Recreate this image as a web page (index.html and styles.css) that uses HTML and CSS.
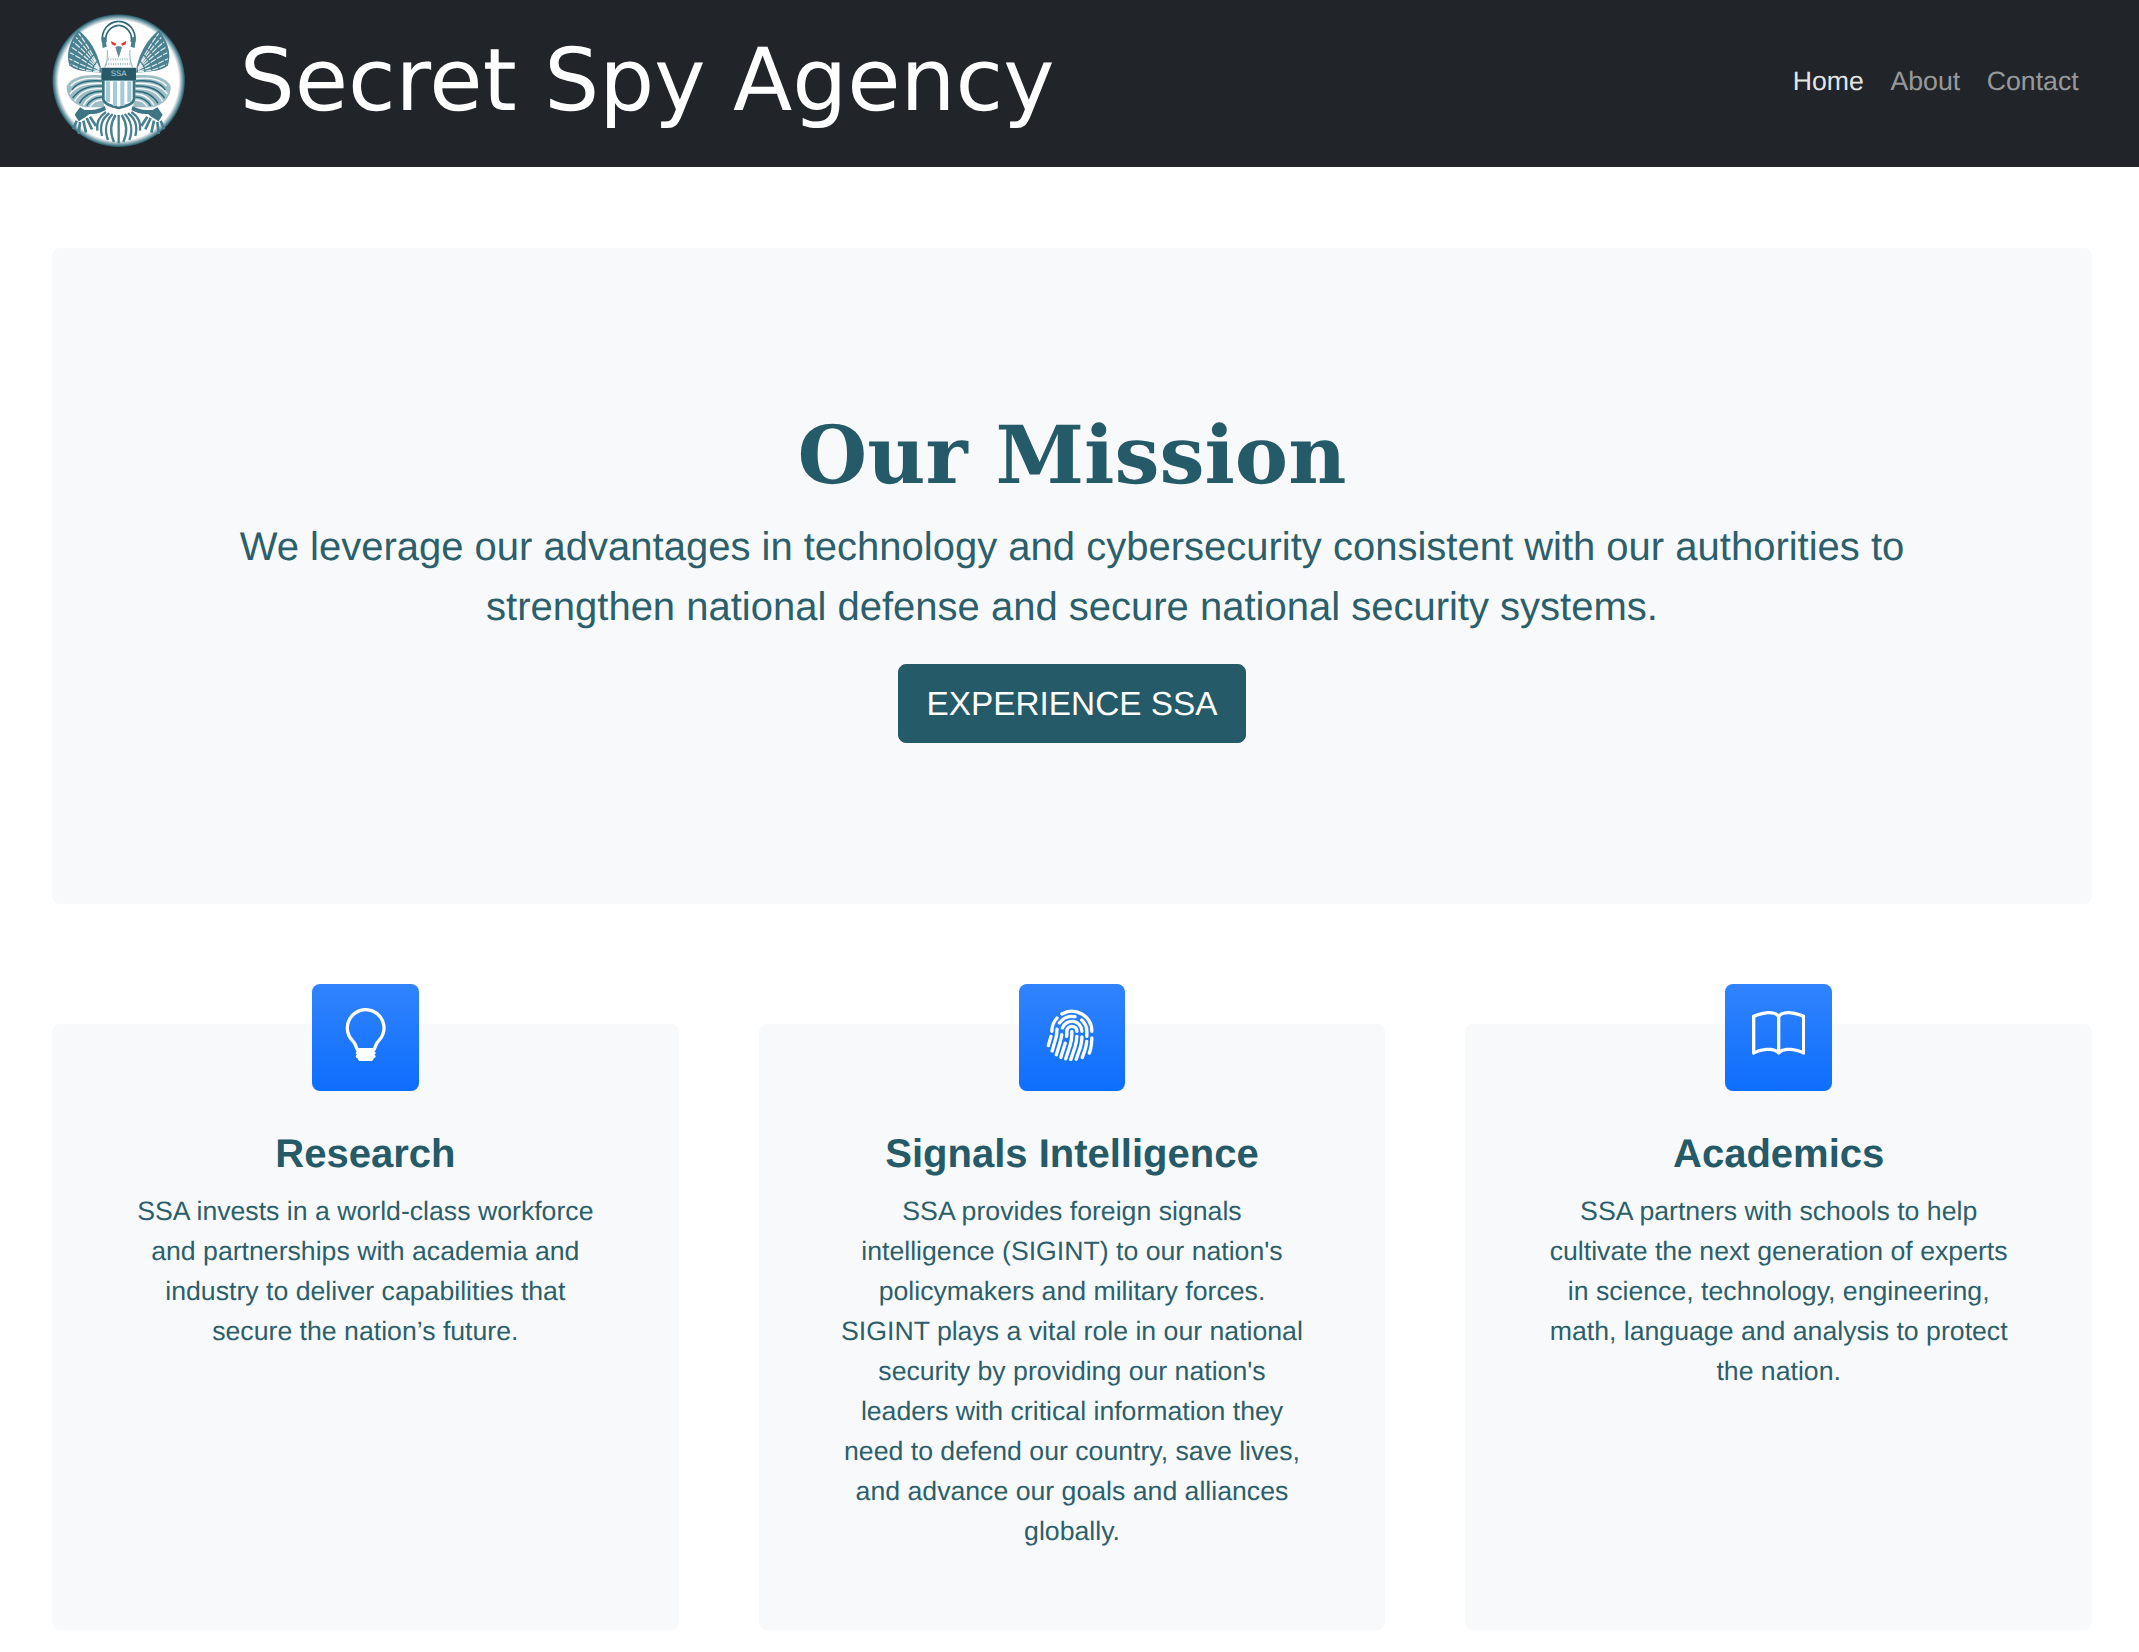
FILE: index.html
```html
<!DOCTYPE html>
<html lang="en">
<head>
<meta charset="utf-8">
<title>Secret Spy Agency</title>
<link rel="stylesheet" href="styles.css">
</head>
<body>
<header class="navbar">
  <a class="brand" href="#">
    <svg class="logo" viewBox="60 39 413 413" role="img" aria-label="SSA seal">
      <defs>
        <radialGradient id="rim" gradientUnits="userSpaceOnUse" cx="266" cy="242" r="200">
          <stop offset="0.9" stop-color="#fff"/>
          <stop offset="0.985" stop-color="#2f6a7a"/>
          <stop offset="1" stop-color="#2f6a7a" stop-opacity="0"/>
        </radialGradient>
        <filter id="soft" x="-5%" y="-5%" width="110%" height="110%"><feGaussianBlur stdDeviation="1.8"/></filter>
        <g id="half">
          <path class="wing" d="M145 90C178 118 200 150 212 200L214 218C170 216 132 212 118 196C108 165 116 128 145 90Z"/>
          <path class="wing-line" d="M208 205C190 165 168 130 146 100M208 206C186 168 162 138 138 112M208 208C180 172 155 145 130 126M208 209C178 182 152 158 124 142M208 210C176 194 150 172 120 158M208 214C176 205 150 192 118 176M208 216C176 214 150 208 122 192"/>
          <path class="swirl" d="M216 226C170 222 125 228 110 258C108 288 130 316 166 322L222 322Z"/>
          <path class="swirl-line" d="M216 236C178 232 140 238 122 258M216 250C176 248 140 254 120 282M216 266C180 264 150 274 134 304M216 282C192 282 172 294 160 316M216 300C200 300 188 308 180 320"/>
          <path class="swirl-dark" d="M216 243C178 240 140 246 126 270M216 258C182 256 150 264 128 294M216 274C188 274 164 284 148 310M216 291C198 292 180 300 170 318"/>
          <path class="claw" d="M224 318C200 332 180 330 164 330L150 322L134 344L146 364L168 350L178 342C196 344 212 338 228 330Z"/>
          <path class="tassel" d="M140 362L130 388M150 366L146 402M160 362L168 398M170 354L186 388M180 350L198 378"/>
          <path class="tail" d="M257 345C244 365 238 395 252 426"/>
          <path class="tail" d="M248 342C230 360 222 388 234 420"/>
          <path class="tail" d="M238 340C218 354 208 376 216 408"/>
          <path class="tail" d="M228 336C210 348 198 366 202 392"/>
          <path class="head" d="M218 126C212 90 235 66 266 64"/>
          <path class="head" d="M228 126C224 100 240 78 266 76"/>
          <path class="cup" d="M214 110L226 112L230 140L218 144Z"/>
          <path class="neck" d="M232 150C234 172 230 190 224 202"/>
          <path class="eye" d="M243 123L259 131L255 137L245 133Z"/>
        </g>
      </defs>
      <circle cx="266" cy="242" r="200" fill="url(#rim)"/>
      <g filter="url(#soft)">
        <use href="#half"/>
        <use href="#half" transform="translate(532 0) scale(-1 1)"/>
        <path class="beak" d="M256 142L266 174L276 142C272 138 260 138 256 142Z"/>
        <path class="tail" d="M266 345V430"/>
        <path class="crop" d="M234 178H298M228 192H304"/>
        <path class="shield" d="M220 238H312V295C312 312 290 318 266 324C242 318 220 312 220 295Z"/>
        <path class="stripe" d="M234 244V306M255 244V318M277 244V318M298 244V306"/>
        <rect class="banner" x="214" y="203" width="104" height="37" rx="2"/>
      </g>
      <text class="seal-text" x="266" y="229">SSA</text>
    </svg>
    <span class="brand-name">Secret Spy Agency</span>
  </a>
  <nav class="nav">
    <a class="nav-link active" href="#">Home</a>
    <a class="nav-link" href="#">About</a>
    <a class="nav-link" href="#">Contact</a>
  </nav>
</header>
<main class="page">
  <section class="hero">
    <h1 class="hero-title">Our Mission</h1>
    <p class="lead">We leverage our advantages in technology and cybersecurity consistent with our authorities to strengthen national defense and secure national security systems.</p>
    <a class="btn" href="#">EXPERIENCE SSA</a>
  </section>
  <section class="features">
    <article class="feature">
      <div class="feature-icon">
        <svg viewBox="0 0 16 16" fill="currentColor"><path d="M2 6a6 6 0 1 1 10.174 4.31c-.203.196-.359.4-.453.619l-.762 1.769A.5.5 0 0 1 10.5 13a.5.5 0 0 1 0 1 .5.5 0 0 1 0 1l-.224.447a1 1 0 0 1-.894.553H6.618a1 1 0 0 1-.894-.553L5.5 15a.5.5 0 0 1 0-1 .5.5 0 0 1 0-1 .5.5 0 0 1-.46-.302l-.761-1.77a1.964 1.964 0 0 0-.453-.618A5.984 5.984 0 0 1 2 6zm6-5a5 5 0 0 0-3.479 8.592c.263.254.514.564.676.941L5.83 12h4.342l.632-1.467c.162-.377.413-.687.676-.941A5 5 0 0 0 8 1z"/></svg>
      </div>
      <h2 class="feature-title">Research</h2>
      <p class="feature-text">SSA invests in a world-class workforce and partnerships with academia and industry to deliver capabilities that secure the nation’s future.</p>
    </article>
    <article class="feature">
      <div class="feature-icon">
        <svg viewBox="0 0 16 16" fill="currentColor"><path d="M8.06 6.5a.5.5 0 0 1 .5.5v.776a11.5 11.5 0 0 1-.552 3.519l-1.331 4.14a.5.5 0 0 1-.952-.305l1.33-4.141a10.5 10.5 0 0 0 .504-3.213V7a.5.5 0 0 1 .5-.5Z"/><path d="M6.06 7a2 2 0 1 1 4 0 .5.5 0 1 1-1 0 1 1 0 1 0-2 0v.332c0 .409-.022.816-.066 1.221A.5.5 0 0 1 6 8.447c.04-.37.06-.742.06-1.115V7Zm3.509 1a.5.5 0 0 1 .487.513 11.5 11.5 0 0 1-.587 3.339l-1.266 3.8a.5.5 0 0 1-.949-.317l1.267-3.8a10.5 10.5 0 0 0 .535-3.048A.5.5 0 0 1 9.569 8Zm-3.356 2.115a.5.5 0 0 1 .33.626L5.24 14.939a.5.5 0 1 1-.955-.296l1.303-4.199a.5.5 0 0 1 .625-.329Z"/><path d="M4.759 5.833A3.501 3.501 0 0 1 11.559 7a.5.5 0 0 1-1 0 2.5 2.5 0 0 0-4.857-.833.5.5 0 1 1-.943-.334Zm.3 1.67a.5.5 0 0 1 .449.546 10.72 10.72 0 0 1-.4 2.031l-1.222 4.072a.5.5 0 1 1-.958-.287L4.15 9.793a9.72 9.72 0 0 0 .363-1.842.5.5 0 0 1 .546-.449Zm6 .647a.5.5 0 0 1 .5.5c0 1.28-.213 2.552-.632 3.762l-1.09 3.145a.5.5 0 0 1-.944-.327l1.089-3.145c.382-1.105.578-2.266.578-3.435a.5.5 0 0 1 .5-.5Z"/><path d="M3.902 4.222a4.996 4.996 0 0 1 5.202-2.113.5.5 0 0 1-.208.979 3.996 3.996 0 0 0-4.163 1.69.5.5 0 0 1-.831-.556Zm6.72-.955a.5.5 0 0 1 .705-.052A4.99 4.99 0 0 1 13.059 7v1.5a.5.5 0 1 1-1 0V7a3.99 3.99 0 0 0-1.386-3.028.5.5 0 0 1-.051-.705ZM3.68 5.842a.5.5 0 0 1 .422.568c-.029.192-.044.39-.044.59 0 .71-.1 1.417-.298 2.1l-1.14 3.923a.5.5 0 1 1-.96-.279L2.8 8.821A6.531 6.531 0 0 0 3.058 7c0-.25.019-.496.054-.736a.5.5 0 0 1 .568-.422Zm8.882 3.66a.5.5 0 0 1 .456.54c-.084 1-.298 1.986-.64 2.934l-.744 2.068a.5.5 0 0 1-.941-.338l.745-2.07a10.51 10.51 0 0 0 .584-2.678.5.5 0 0 1 .54-.456Z"/><path d="M4.81 1.37A6.5 6.5 0 0 1 14.56 7a.5.5 0 1 1-1 0 5.5 5.5 0 0 0-8.25-4.765.5.5 0 0 1-.5-.865Zm-.89 1.257a.5.5 0 0 1 .04.706A5.478 5.478 0 0 0 2.56 7a.5.5 0 0 1-1 0c0-1.664.626-3.184 1.655-4.333a.5.5 0 0 1 .706-.04ZM1.915 8.02a.5.5 0 0 1 .346.616l-.779 2.767a.5.5 0 1 1-.962-.27l.778-2.767a.5.5 0 0 1 .617-.346Zm12.15.481a.5.5 0 0 1 .49.51c-.03 1.499-.161 3.025-.727 4.533l-.07.187a.5.5 0 0 1-.936-.351l.07-.187c.506-1.35.634-2.74.663-4.202a.5.5 0 0 1 .51-.49Z"/></svg>
      </div>
      <h2 class="feature-title">Signals Intelligence</h2>
      <p class="feature-text">SSA provides foreign signals intelligence (SIGINT) to our nation's policymakers and military forces. SIGINT plays a vital role in our national security by providing our nation's leaders with critical information they need to defend our country, save lives, and advance our goals and alliances globally.</p>
    </article>
    <article class="feature">
      <div class="feature-icon">
        <svg viewBox="0 0 16 16" fill="currentColor"><path d="M1 2.828c.885-.37 2.154-.769 3.388-.893 1.33-.134 2.458.063 3.112.752v9.746c-.935-.53-2.12-.603-3.213-.493-1.18.12-2.37.461-3.287.811V2.828zm7.5-.141c.654-.689 1.782-.886 3.112-.752 1.234.124 2.503.523 3.388.893v9.923c-.918-.35-2.107-.692-3.287-.81-1.094-.111-2.278-.039-3.213.492V2.687zM8 1.783C7.015.936 5.587.81 4.287.94c-1.514.153-3.042.672-3.994 1.105A.5.5 0 0 0 0 2.5v11a.5.5 0 0 0 .707.455c.882-.4 2.303-.881 3.68-1.02 1.409-.142 2.59.087 3.223.877a.5.5 0 0 0 .78 0c.633-.79 1.814-1.019 3.222-.877 1.378.139 2.8.62 3.681 1.02A.5.5 0 0 0 16 13.5v-11a.5.5 0 0 0-.293-.455c-.952-.433-2.48-.952-3.994-1.105C10.413.809 8.985.936 8 1.783z"/></svg>
      </div>
      <h2 class="feature-title">Academics</h2>
      <p class="feature-text">SSA partners with schools to help cultivate the next generation of experts in science, technology, engineering, math, language and analysis to protect the nation.</p>
    </article>
  </section>
</main>
</body>
</html>
```
FILE: styles.css
```css
* { box-sizing: border-box; }
html, body { margin: 0; padding: 0; }
body {
  font-family: "Liberation Sans", Arial, sans-serif;
  font-size: 26.67px;
  line-height: 40px;
  color: #2c5f6c;
  background: #fff;
  text-rendering: geometricPrecision;
}
a { text-decoration: none; }

.navbar {
  height: 167px;
  padding: 0 47px 0 50px;
  background: #212529;
  display: flex;
  align-items: center;
  justify-content: space-between;
}
.brand { display: flex; align-items: center; gap: 52px; color: #fff; }
.logo { width: 137.67px; height: 137.67px; display: block; margin-top: -3px; }
.brand-name {
  font-family: "DejaVu Sans", sans-serif;
  font-size: 86.67px;
  line-height: 104px;
  margin-top: -6px;
}
.nav { display: flex; padding-bottom: 5px; }
.nav-link { padding: 0 13.33px; color: rgba(255, 255, 255, .55); }
.nav-link.active { color: rgba(255, 255, 255, .9); }

.page { padding: 81px 47px 0 52px; }
.hero {
  background: #f8f9fa;
  border-radius: 8px;
  padding: 160px 40px;
  text-align: center;
  height: 656px;
}
.hero-title {
  margin: 0 0 14.33px;
  font-family: "DejaVu Serif", serif;
  font-size: 80px;
  line-height: 95px;
  font-weight: 700;
  color: #255a68;
}
.lead {
  margin: 0 auto 26.67px;
  max-width: 1780px;
  font-size: 40px;
  line-height: 60px;
}
.btn {
  display: inline-block;
  padding: 15.33px 27.17px 11.33px;
  font-size: 33.33px;
  line-height: 50px;
  color: #fff;
  background: #255a68;
  border: 1.67px solid #255a68;
  border-radius: 8px;
}

.features {
  margin-top: 120px;
  display: grid;
  grid-template-columns: repeat(3, 1fr);
  gap: 80px;
}
.feature {
  background: #f8f9fa;
  border-radius: 8px;
  padding: 0 80px 80px;
  text-align: center;
  height: 606px;
}
.feature-icon {
  width: 106.67px;
  height: 106.67px;
  margin: -40px auto 39px;
  border-radius: 8px;
  color: #fff;
  background: #0d6efd linear-gradient(180deg, rgba(255, 255, 255, .15), rgba(255, 255, 255, 0));
  display: flex;
  align-items: center;
  justify-content: center;
}
.feature-icon svg { width: 53.33px; height: 53.33px; display: block; margin-bottom: 5px; }
.feature-title {
  margin: 0 0 13.33px;
  font-size: 40px;
  line-height: 48px;
  font-weight: 700;
  color: #255a68;
}
.feature-text { margin: 0; }

.wing { fill: #4a8190; }
.wing-line { fill: none; stroke: #e4eef1; stroke-width: 3.5; stroke-dasharray: 18 4; }
.swirl { fill: #9dbdc6; }
.swirl-line { fill: none; stroke: #f6fafb; stroke-width: 4; }
.swirl-dark { fill: none; stroke: #2f6a7a; stroke-width: 4.5; }
.claw { fill: #3c7585; }
.tassel { fill: none; stroke: #4a8190; stroke-width: 8; }
.tail { fill: none; stroke: #4a8190; stroke-width: 7; }
.head { fill: none; stroke: #2f6a7a; stroke-width: 5; }
.cup { fill: #4a8090; }
.neck { fill: none; stroke: #a8c3cb; stroke-width: 4; }
.eye { fill: #ee3030; }
.beak { fill: #5f8b98; }
.crop { fill: none; stroke: #a5c0c8; stroke-width: 7; stroke-dasharray: 3 4; }
.shield { fill: #fff; stroke: #3c7585; stroke-width: 8; }
.stripe { fill: none; stroke: #a3cad6; stroke-width: 12; }
.banner { fill: #255a68; }
.seal-text {
  font-family: "Liberation Sans", sans-serif;
  font-size: 24px;
  fill: #b7ced5;
  text-anchor: middle;
}
```
